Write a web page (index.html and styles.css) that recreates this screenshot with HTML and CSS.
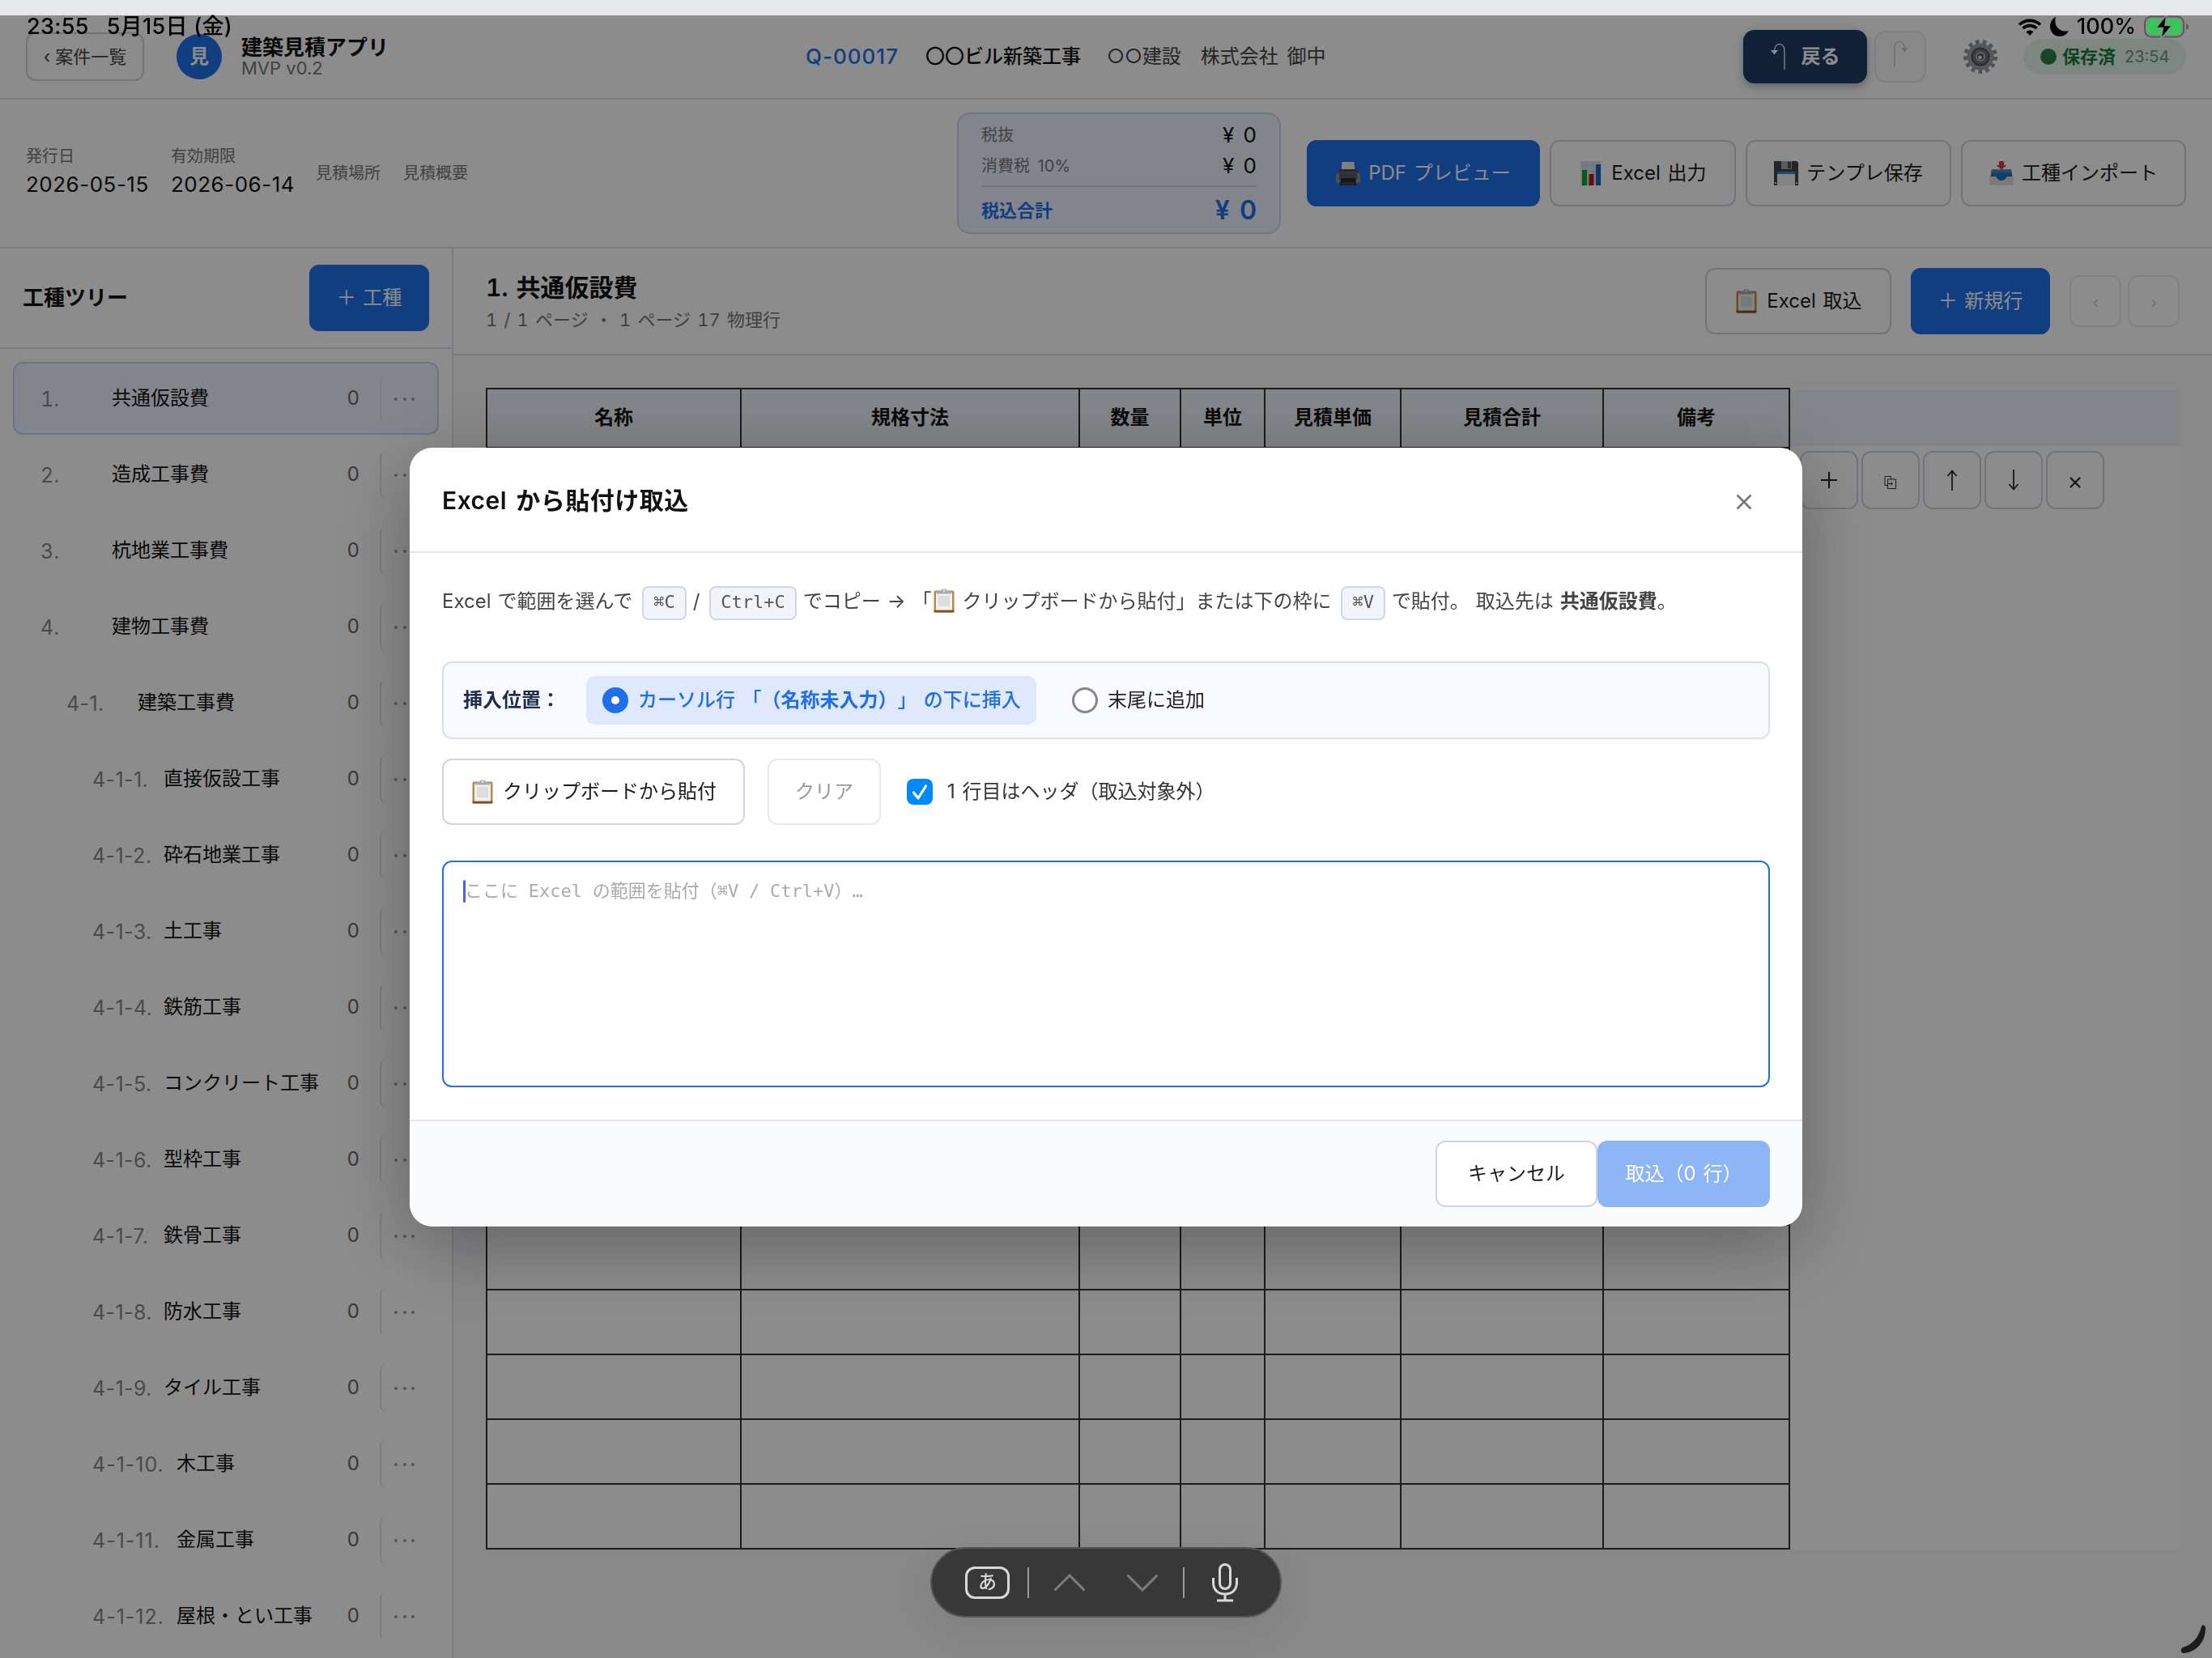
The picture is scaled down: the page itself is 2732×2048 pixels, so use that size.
FILE: index.html
```html
<!DOCTYPE html>
<html lang="ja">
<head>
    <meta charset="UTF-8">
    <meta name="viewport" content="width=device-width, initial-scale=1.0">
    <title>建築見積アプリ</title>
    <link rel="stylesheet" href="styles.css">
</head>
<body>
    <!-- Icon definitions -->
    <svg class="defs" width="0" height="0">
        <symbol id="i-clip" viewBox="0 0 30 30">
            <rect x="2.5" y="2.5" width="25" height="27" rx="2" fill="#b98a4e"/>
            <rect x="2.5" y="26.5" width="25" height="3" rx="1" fill="#80531f"/>
            <rect x="5" y="5" width="20" height="21.5" fill="#f0f0f0"/>
            <rect x="8" y="9" width="14" height="13" fill="#dcdcdc"/>
            <path d="M6 6.500V4l5-1 1.500-2.500h5L19 3l5 1v2.500z" fill="#a9adb3"/>
            <circle cx="15" cy="2.500" r="1.200" fill="#e8f1f5"/>
        </symbol>
        <symbol id="i-printer" viewBox="0 0 30 30">
            <path d="M7.500 1h15l1 11h-17z" fill="#ece8e2"/>
            <path d="M5 10h20l4 5v11H1V15z" fill="#606770"/>
            <path d="M5 10h20l2 3H3z" fill="#474c54"/>
            <rect x="0" y="15" width="30" height="12" rx="2" fill="#878e96"/>
            <rect x="4" y="15" width="22" height="8" fill="#565d66"/>
            <path d="M6 21h18l1 9H5z" fill="#25282c"/>
            <path d="M7 26h16v3.500H7z" fill="#414549"/>
        </symbol>
        <symbol id="i-chart" viewBox="0 0 30 30">
            <rect x="2.500" y="0" width="25" height="30" fill="#d5e0ea"/>
            <path d="M2.500 6h25M2.500 12h25M2.500 18h25M2.500 24h25M9 0v30M18 0v30" stroke="#bccbd8" stroke-width=".6"/>
            <rect x="4" y="11" width="6" height="19" fill="#0ba02b"/>
            <rect x="12.500" y="16" width="6" height="14" fill="#c31216"/>
            <rect x="21" y="4" width="6" height="26" fill="#1466c4"/>
        </symbol>
        <symbol id="i-floppy" viewBox="0 0 30 30">
            <path d="M0 0h28l2 2v28H0z" fill="#3f444b"/>
            <rect x="9" y="0" width="13" height="10" fill="#a4a9ad"/>
            <rect x="17" y="1" width="4" height="8" fill="#4b5056"/>
            <rect x="4" y="13" width="22" height="17" fill="#eceff1"/>
            <rect x="4" y="13" width="22" height="3" fill="#3387d2"/>
            <path d="M1 26h2v2H1zM27 26h2v2h-2z" fill="#dde"/>
        </symbol>
        <symbol id="i-inbox" viewBox="0 0 30 30">
            <path d="M12 0h6v5h3.500L15 10.500 8.500 5H12z" fill="#d8403a"/>
            <path d="M3 10.500h24l1.500 9v5H1.500v-5z" fill="#2470b4"/>
            <path d="M3 10.500h24l.8 4H2.200z" fill="#3d89cc"/>
            <path d="M0 19h7c2 0 3 5 8 5s6-5 8-5h7v9.500c0 1-.5 1.500-1.500 1.500h-27C.5 30 0 29.500 0 28.500z" fill="#e4e1dc"/>
        </symbol>
        <symbol id="i-copy" viewBox="0 0 18 18">
            <path d="M2 1.500h7.500V5M2 1.500v11h3M5.500 5h6l4 0v11.500h-10z" fill="none" stroke="#333" stroke-width="1"/>
            <path d="M5.500 10.500h6M9.500 8.500l2 2-2 2" fill="none" stroke="#333" stroke-width="1"/>
        </symbol>
    </svg>

    <div class="app">
        <header class="topbar">
            <div class="topbar-left">
                <button class="back-btn">‹ 案件一覧</button>
                <div class="logo">見</div>
                <div class="brand">
                    <div class="brand-name">建築見積アプリ</div>
                    <div class="brand-sub">MVP v0.2</div>
                </div>
            </div>
            <div class="topbar-center">
                <span class="quote-no">Q-00017</span>
                <span class="quote-title">〇〇ビル新築工事</span>
                <span class="quote-client">○○建設　株式会社 御中</span>
            </div>
            <div class="topbar-right">
                <button class="undo-btn">
                    <svg width="20" height="34" viewBox="0 0 20 34"><path d="M17 33V9c0-9-12-11-12.500 1" fill="none" stroke="currentColor" stroke-width="1.300"/><path d="M0 9h9l-4.500 5.500z" fill="currentColor"/></svg>
                    戻る
                </button>
                <button class="redo-btn">
                    <svg width="20" height="34" viewBox="0 0 20 34"><path d="M3 33V9c0-9 12-11 12.500 1" fill="none" stroke="currentColor" stroke-width="1.300"/><path d="M11 9h9l-4.500 5.500z" fill="currentColor"/></svg>
                </button>
                <svg class="gear" width="44" height="44" viewBox="-22 -22 44 44">
                    <circle r="18.500" fill="none" stroke="#8d959d" stroke-width="5" stroke-dasharray="4.600 4.340"/>
                    <circle r="14" fill="#666e77" stroke="#9aa1a8" stroke-width="5"/>
                    <circle r="10.500" fill="#6c747c" stroke="#454b52" stroke-width="1.500"/>
                    <circle r="5" fill="#525960" stroke="#adb4ba" stroke-width="2"/>
                    <circle cx="-.5" cy="1" r="2.200" fill="#e8ebee"/>
                </svg>
                <div class="saved"><i class="saved-dot"></i><b>保存済</b><span>23:54</span></div>
            </div>
        </header>

        <section class="summary">
            <div class="meta">
                <div class="meta-item"><label>発行日</label><span>2026-05-15</span></div>
                <div class="meta-item"><label>有効期限</label><span>2026-06-14</span></div>
                <div class="meta-item empty"><label>見積場所</label></div>
                <div class="meta-item empty"><label>見積概要</label></div>
            </div>
            <div class="totals">
                <div class="total-row"><span>税抜</span><b>¥ 0</b></div>
                <div class="total-row"><span>消費税 10%</span><b>¥ 0</b></div>
                <div class="total-row grand"><span>税込合計</span><b>¥ 0</b></div>
            </div>
            <div class="actions">
                <button class="btn primary w-pdf"><svg class="ico"><use href="#i-printer"/></svg>PDF プレビュー</button>
                <button class="btn w-xls"><svg class="ico"><use href="#i-chart"/></svg>Excel 出力</button>
                <button class="btn w-tpl"><svg class="ico"><use href="#i-floppy"/></svg>テンプレ保存</button>
                <button class="btn w-imp"><svg class="ico"><use href="#i-inbox"/></svg>工種インポート</button>
            </div>
        </section>

        <div class="workspace">
            <aside class="sidebar">
                <div class="side-head">
                    <h2>工種ツリー</h2>
                    <button class="btn primary w-add">＋ 工種</button>
                </div>
                <div class="tree" id="tree"></div>
            </aside>

            <main class="main">
                <div class="main-head">
                    <div class="main-title">
                        <h1>1. 共通仮設費</h1>
                        <p>1 / 1 ページ ・ 1 ページ 17 物理行</p>
                    </div>
                    <button class="btn w-take"><svg class="ico"><use href="#i-clip"/></svg>Excel 取込</button>
                    <button class="btn primary w-new">＋ 新規行</button>
                    <div class="pager"><button>‹</button><button>›</button></div>
                </div>
                <div class="sheet">
                    <div class="grid" id="grid">
                        <div class="th">名称</div>
                        <div class="th">規格寸法</div>
                        <div class="th">数量</div>
                        <div class="th">単位</div>
                        <div class="th">見積単価</div>
                        <div class="th">見積合計</div>
                        <div class="th">備考</div>
                    </div>
                    <div class="ops">
                        <div class="ops-head"></div>
                        <div class="ops-row">
                            <button><svg width="22" height="22" viewBox="0 0 22 22"><path d="M11 1v20M1 11h20" stroke="#222" stroke-width="2"/></svg></button>
                            <button class="copy"><svg width="18" height="18"><use href="#i-copy"/></svg></button>
                            <button><svg width="16" height="26" viewBox="0 0 16 26"><path d="M8 26V1.500M2.500 8L8 1.500 13.500 8" fill="none" stroke="#222" stroke-width="1.700"/></svg></button>
                            <button><svg width="16" height="26" viewBox="0 0 16 26"><path d="M8 0v24.500M2.500 18L8 24.500 13.500 18" fill="none" stroke="#222" stroke-width="1.700"/></svg></button>
                            <button class="del"><svg width="14" height="14" viewBox="0 0 14 14"><path d="M1 1l12 12M13 1L1 13" stroke="#222" stroke-width="2.200"/></svg></button>
                        </div>
                    </div>
                </div>
            </main>
        </div>
    </div>

    <div class="overlay">
        <div class="modal">
            <div class="modal-head">
                <h3>Excel から貼付け取込</h3>
                <svg width="20" height="20" viewBox="0 0 20 20"><path d="M1.500 1.500l17 17M18.500 1.500l-17 17" stroke="#777" stroke-width="2.600"/></svg>
            </div>
            <div class="modal-body">
                <p class="hint">Excel で範囲を選んで <kbd>⌘C</kbd> / <kbd>Ctrl+C</kbd> でコピー → 「<svg class="ico"><use href="#i-clip"/></svg> クリップボードから貼付」または下の枠に <kbd>⌘V</kbd> で貼付。 取込先は <b>共通仮設費</b>。</p>
                <div class="position">
                    <strong>挿入位置：</strong>
                    <label class="choice active"><i class="radio on"></i><span>カーソル行 「<b>（名称未入力）</b>」 の下に挿入</span></label>
                    <label class="choice"><i class="radio"></i><span>末尾に追加</span></label>
                </div>
                <div class="tools">
                    <button class="btn w-paste"><svg class="ico"><use href="#i-clip"/></svg>クリップボードから貼付</button>
                    <button class="btn w-clear disabled">クリア</button>
                    <label class="check">
                        <svg width="32" height="32" viewBox="0 0 32 32"><rect width="32" height="32" rx="8" fill="#08f"/><path d="M8.500 17l5.500 7L23.500 9" fill="none" stroke="#fff" stroke-width="3.200" stroke-linecap="round" stroke-linejoin="round"/></svg>
                        <span>1 行目はヘッダ（取込対象外）</span>
                    </label>
                </div>
                <div class="paste-area"><i class="caret"></i><span>ここに Excel の範囲を貼付（⌘V / Ctrl+V）…</span></div>
            </div>
            <div class="modal-foot">
                <button class="btn w-cancel">キャンセル</button>
                <button class="btn primary w-import">取込（0 行）</button>
            </div>
        </div>
    </div>

    <!-- iPad status bar -->
    <div class="status">
        <div class="status-left"><span>23:55</span><span>5月15日 (金)</span></div>
        <div class="status-right">
            <svg width="30" height="22" viewBox="0 0 30 22"><path d="M2 8.500a19 19 0 0 1 26 0M6.500 13a12.500 12.500 0 0 1 17 0" fill="none" stroke="#000" stroke-width="3.600"/><path d="M10.500 17.300a6.500 6.500 0 0 1 9 0L15 22z"/></svg>
            <svg width="23" height="24" viewBox="0 0 23 24"><path d="M7 0C2.500 2 0 6.500 0 11.500 0 18.500 5.200 24 12 24c5 0 9-2.800 10.800-7C14 19.500 3.500 13 7 0z"/></svg>
            <span>100%</span>
            <svg width="56" height="28" viewBox="0 0 56 28"><rect x="1" y="1.500" width="48" height="25" rx="8" fill="none" stroke="#5a5a5a" stroke-width="2"/><rect x="4" y="4.500" width="42" height="19" rx="5" fill="#34c759"/><path d="M52 10c4 1.500 4 6.500 0 8z" fill="#5a5a5a"/><path d="M28-1L15 15.500h8.500L21 29l13.500-16.500H26z" fill="#000" stroke="#8c8c8c" stroke-width="1.500"/></svg>
        </div>
    </div>

    <!-- Floating keyboard bar -->
    <div class="kbar">
        <div class="kbar-lang">あ</div>
        <i></i>
        <svg class="dim" width="40" height="22" viewBox="0 0 40 22"><path d="M1.500 20.500L20 2l18.500 18.500" fill="none" stroke="#7c7c7c" stroke-width="3"/></svg>
        <svg class="dim" width="40" height="22" viewBox="0 0 40 22"><path d="M1.500 1.500L20 20 38.500 1.500" fill="none" stroke="#7c7c7c" stroke-width="3"/></svg>
        <i></i>
        <svg class="mic" width="32" height="48" viewBox="0 0 32 48" fill="none" stroke="#d8d8d8" stroke-width="3"><rect x="9.500" y="1.500" width="13" height="30" rx="6.500"/><path d="M1.500 18v6c0 9 6 14 14.500 14s14.500-5 14.500-14v-6M16 38v8M6 46h20"/></svg>
    </div>

    <svg class="corner" width="34" height="36" viewBox="0 0 34 36"><path d="M27 2c1-2.500 5-2 5 2C32 20 22 33 6 35 1 35.500 0 29 5 27.500 17 24 24 14 27 2z" fill="#1c1c1c"/></svg>

    <script>
        const items = [
            [1, '1.', '共通仮設費'],
            [1, '2.', '造成工事費'],
            [1, '3.', '杭地業工事費'],
            [1, '4.', '建物工事費'],
            [2, '4-1.', '建築工事費'],
            [3, '4-1-1.', '直接仮設工事'],
            [3, '4-1-2.', '砕石地業工事'],
            [3, '4-1-3.', '土工事'],
            [3, '4-1-4.', '鉄筋工事'],
            [3, '4-1-5.', 'コンクリート工事'],
            [3, '4-1-6.', '型枠工事'],
            [3, '4-1-7.', '鉄骨工事'],
            [3, '4-1-8.', '防水工事'],
            [3, '4-1-9.', 'タイル工事'],
            [3, '4-1-10.', '木工事'],
            [3, '4-1-11.', '金属工事'],
            [3, '4-1-12.', '屋根・とい工事']
        ];

        document.getElementById('tree').innerHTML = items.map(([level, no, name], i) => `
            <div class="node level-${level}${i === 0 ? ' selected' : ''}">
                <span class="node-no${no.length > 6 ? ' long' : ''}">${no}</span>
                <span class="node-name">${name}</span>
                <span class="node-count">0</span>
                <span class="node-more"><i></i><i></i><i></i></span>
            </div>`).join('');

        // 17 empty rows x 7 columns
        document.getElementById('grid').insertAdjacentHTML('beforeend', '<div class="td"></div>'.repeat(17 * 7));
    </script>
</body>
</html>
```
FILE: styles.css
```css
* {
    box-sizing: border-box;
}
body {
    margin: 0;
    width: 2732px;
    height: 2048px;
    overflow: hidden;
    background: #e6e8ec;
    color: #111;
    font-family: Inter, "Noto Sans CJK JP", sans-serif;
    font-size: 24px;
    line-height: 1.2;
    word-spacing: 2px;
    text-spacing-trim: space-all;
}
button {
    font: inherit;
    word-spacing: inherit;
    color: inherit;
    padding: 0;
    margin: 0;
}
h1, h2, h3, p {
    margin: 0;
}
.defs {
    position: absolute;
}
.app {
    margin-top: 19px;
    height: 2029px;
    background: #fff;
    display: flex;
    flex-direction: column;
}

/* Buttons */
.btn {
    display: inline-flex;
    align-items: center;
    justify-content: center;
    height: 82px;
    border: 2px solid #ced4e4;
    border-radius: 12px;
    background: #fff;
    white-space: nowrap;
    color: #1a1a1a;
}
.btn.primary {
    background: #1f6feb;
    border-color: #1f6feb;
    color: #fff;
}
.ico {
    width: 30px;
    height: 30px;
    margin-right: 10px;
    flex: none;
}
.w-pdf { width: 288px; }
.w-xls { width: 230px; }
.w-tpl { width: 254px; }
.w-imp { width: 278px; }
.w-add { width: 148px; }
.w-take { width: 230px; }
.w-new { width: 172px; }
.w-paste { width: 374px; }
.w-clear { width: 140px; }
.w-cancel { width: 200px; }
.w-import { width: 213px; }

/* Top bar */
.topbar {
    height: 104px;
    flex: none;
    border-bottom: 2px solid #e0e2ee;
    display: grid;
    grid-template-columns: 995px 1fr 579px;
    align-items: center;
}
.topbar-left {
    display: flex;
    align-items: center;
    padding-left: 32px;
}
.back-btn {
    width: 146px;
    height: 60px;
    border: 2px solid #ced4e4;
    border-radius: 12px;
    background: #fff;
    font-size: 22px;
    color: #444;
    word-spacing: 0;
}
.logo {
    width: 56px;
    height: 56px;
    margin: 0 24px 0 40px;
    border-radius: 50%;
    background: #1f6feb;
    color: #fff;
    font-weight: 600;
    display: flex;
    align-items: center;
    justify-content: center;
}
.brand-name {
    font-size: 26px;
    font-weight: 600;
    line-height: 28px;
}
.brand-sub {
    font-size: 22px;
    line-height: 22px;
    color: #777;
    word-spacing: 0;
}
.topbar-center {
    display: flex;
    align-items: center;
    white-space: nowrap;
}
.quote-no {
    width: 148px;
    font-size: 26px;
    font-weight: 500;
    letter-spacing: 1px;
    color: #1f6feb;
}
.quote-title {
    font-weight: 500;
    margin-right: 32px;
}
.quote-client {
    color: #444;
    word-spacing: 4px;
}
.topbar-right {
    display: flex;
    align-items: center;
}
.undo-btn {
    width: 153px;
    height: 66px;
    border: 0;
    border-radius: 14px;
    background: #203c64;
    color: #fff;
    font-weight: 600;
    display: flex;
    align-items: center;
    justify-content: center;
    gap: 18px;
    box-shadow: 0 4px 12px rgba(32, 60, 100, .4);
}
.redo-btn {
    width: 64px;
    height: 64px;
    margin-left: 9px;
    border: 2px solid #e6e8f0;
    border-radius: 14px;
    background: #fafafc;
    color: #c4c6cc;
}
.gear {
    margin: 0 31px 0 45px;
}
.saved {
    width: 201px;
    height: 44px;
    border-radius: 22px;
    background: #e4f4ea;
    color: #1a7f37;
    display: flex;
    align-items: center;
    padding-left: 21px;
    font-size: 22px;
}
.saved-dot {
    width: 20px;
    height: 20px;
    border-radius: 50%;
    background: #2a7f44;
    margin-right: 7px;
}
.saved b {
    font-weight: 600;
    margin-right: 11px;
}
.saved span {
    font-size: 20px;
    color: #5f9f76;
}

/* Summary */
.summary {
    height: 184px;
    flex: none;
    border-bottom: 2px solid #e0e2ee;
    display: flex;
    align-items: center;
    padding-left: 32px;
}
.meta {
    width: 1150px;
    display: flex;
    align-items: center;
    gap: 28px;
}
.meta-item {
    min-width: 80px;
}
.meta-item label {
    display: block;
    font-size: 20px;
    line-height: 26px;
    color: #777;
}
.meta-item span {
    display: block;
    width: 151px;
    font-size: 26px;
    letter-spacing: .5px;
    line-height: 40px;
    padding-top: 2px;
    white-space: nowrap;
}
.totals {
    width: 400px;
    height: 150px;
    border: 2px solid #c8d8f5;
    border-radius: 16px;
    background: #eef3ff;
    padding: 7px 28px 0;
    margin-right: 32px;
}
.total-row {
    display: flex;
    justify-content: space-between;
    align-items: center;
    height: 38px;
    font-size: 20px;
    color: #777;
    word-spacing: 4px;
}
.total-row b {
    font-size: 26px;
    font-weight: 400;
    color: #111;
}
.total-row.grand {
    height: 60px;
    margin-top: 5px;
    border-top: 2px solid #c8d4f0;
    font-size: 22px;
    font-weight: 600;
    color: #1f6feb;
}
.total-row.grand b {
    font-size: 32px;
    font-weight: 600;
    color: #1f6feb;
}
.actions {
    display: flex;
    gap: 12px;
}

/* Sidebar */
.workspace {
    flex: 1;
    display: flex;
    min-height: 0;
}
.sidebar {
    width: 560px;
    border-right: 2px solid #e0e2ee;
    overflow: hidden;
}
.side-head {
    height: 124px;
    border-bottom: 2px solid #e0e2ee;
    display: flex;
    align-items: center;
    justify-content: space-between;
    padding: 0 28px;
}
.side-head h2 {
    font-size: 26px;
    font-weight: 600;
}
.tree {
    padding: 16px;
    display: flex;
    flex-direction: column;
    gap: 4px;
}
.node {
    flex: none;
    height: 90px;
    border: 2px solid transparent;
    border-radius: 12px;
    display: flex;
    align-items: center;
    padding: 1px 12px 0 0;
}
.node.selected {
    background: #eef3ff;
    border-color: #c2d5f7;
}
.level-1 { padding-left: 32px; }
.level-2 { padding-left: 64px; }
.level-3 { padding-left: 96px; }
.level-1 .node-no {
    font-variant-numeric: tabular-nums;
}
.node-no {
    width: 72px;
    margin-right: 16px;
    font-size: 25px;
    letter-spacing: .4px;
    white-space: nowrap;
    color: #888;
}
.node-no.long {
    width: 88px;
    letter-spacing: 1px;
}
.node-name {
    flex: 1;
    white-space: nowrap;
}
.node-count {
    color: #666;
    margin-right: 25px;
}
.node-more {
    width: 59px;
    height: 59px;
    border-left: 2px solid #e0e2ee;
    border-radius: 8px;
    display: flex;
    align-items: center;
    justify-content: center;
    gap: 6.5px;
}
.node-more i {
    width: 4px;
    height: 4px;
    border-radius: 50%;
    background: #9a9cab;
}

/* Main */
.main {
    flex: 1;
    background: #f7f7fa;
}
.main-head {
    height: 132px;
    background: #fff;
    border-bottom: 2px solid #e0e2ee;
    display: flex;
    align-items: center;
    padding: 0 40px;
}
.main-title {
    flex: 1;
    padding-top: 2px;
    font-variant-numeric: tabular-nums;
}
.main-title h1 {
    font-size: 30px;
    line-height: 44px;
    font-weight: 600;
}
.main-title p {
    font-size: 22px;
    line-height: 37px;
    color: #777;
    word-spacing: 2.3px;
}
.w-new {
    margin-left: 24px;
}
.pager {
    display: flex;
    gap: 8px;
    margin-left: 24px;
}
.pager button {
    width: 64px;
    height: 64px;
    border: 2px solid #e8eaf2;
    border-radius: 12px;
    background: #fff;
    color: #d4d4d8;
    font-size: 20px;
    padding-top: 4px;
}
.sheet {
    display: flex;
    margin: 40px 40px 0;
    background: #fff;
}
.grid {
    width: 1611px;
    flex: none;
    display: grid;
    grid-template-columns: 314px 418px 125px 104px 168px 250px 230px;
    grid-template-rows: 73px;
    grid-auto-rows: 80px;
    border-top: 2px solid #333;
    border-left: 2px solid #333;
}
.th, .td {
    border-right: 2px solid #333;
    border-bottom: 2px solid #333;
}
.th {
    background: #edf2fa;
    font-weight: 600;
    display: flex;
    align-items: center;
    justify-content: center;
}
.ops {
    flex: 1;
}
.ops-head {
    height: 70px;
    margin-top: 2px;
    background: #edf2fa;
}
.ops-row {
    display: flex;
    gap: 4px;
    padding: 6px 0 0 12px;
}
.ops-row button {
    width: 72px;
    height: 72px;
    border: 2px solid #ced4e4;
    border-radius: 12px;
    background: #fff;
    display: flex;
    align-items: center;
    justify-content: center;
}
.ops-row .copy, .ops-row .del {
    padding-top: 5px;
}

/* Modal */
.overlay {
    position: fixed;
    inset: 19px 0 0 0;
    padding-top: 1px;
    background: rgba(0, 0, 0, .45);
    display: flex;
    align-items: center;
    justify-content: center;
}
.modal {
    width: 1720px;
    height: 962px;
    border-radius: 28px;
    background: #fff;
    overflow: hidden;
    display: flex;
    flex-direction: column;
    box-shadow: 0 24px 96px rgba(0, 0, 0, .3);
}
.modal-head {
    height: 130px;
    border-bottom: 2px solid #e0e4f0;
    display: flex;
    align-items: center;
    justify-content: space-between;
    padding: 1px 62px 0 40px;
}
.modal-head h3 {
    font-size: 30px;
    font-weight: 600;
    letter-spacing: .5px;
    word-spacing: 3px;
}
.modal-head svg {
    margin-top: 5px;
}
.modal-body {
    flex: 1;
    padding: 40px 40px 0;
}
.hint {
    height: 94px;
    line-height: 40px;
    color: #444;
    white-space: nowrap;
    word-spacing: 1.2px;
}
.hint .ico {
    margin: 0;
    vertical-align: -6px;
}
kbd {
    display: inline-block;
    height: 42px;
    line-height: 36px;
    padding: 0 12px;
    margin: 0 0 0 4px;
    border: 2px solid #cfd6e6;
    border-radius: 8px;
    background: #f2f4fa;
    font-family: "DejaVu Sans Mono", "Noto Sans CJK JP", monospace;
    font-size: 22px;
    color: #555;
}
.position {
    height: 96px;
    border: 2px solid #d6e0f3;
    border-radius: 12px;
    background: #f8faff;
    display: flex;
    align-items: center;
    padding-left: 24px;
}
.position strong {
    width: 152px;
    font-weight: 600;
    color: #1f2d4d;
}
.choice {
    height: 60px;
    border-radius: 10px;
    display: flex;
    align-items: center;
    gap: 12px;
    padding: 0 20px;
    margin-right: 24px;
    color: #222;
    white-space: nowrap;
}
.choice.active {
    width: 556px;
    background: #dfe8ff;
    color: #1f6feb;
    font-weight: 500;
}
.choice b {
    font-weight: 700;
}
.radio {
    width: 32px;
    height: 32px;
    border: 3px solid #85858a;
    border-radius: 50%;
    background: #fff;
    flex: none;
}
.radio.on {
    border: 11px solid #1f6feb;
}
.tools {
    display: flex;
    align-items: center;
    margin-top: 24px;
}
.w-clear {
    margin: 0 32px 0 28px;
}
.disabled {
    border-color: #e6e9f1;
    color: #999;
}
.check {
    display: flex;
    align-items: center;
    gap: 18px;
    color: #333;
}
.paste-area {
    height: 280px;
    margin-top: 44px;
    border: 2px solid #1f6feb;
    border-radius: 12px;
    padding: 22px 24px;
    display: flex;
    font-family: "DejaVu Sans Mono", "Noto Sans CJK JP", monospace;
    font-size: 22px;
    line-height: 28px;
    color: #aaa;
    word-spacing: -.5px;
}
.caret {
    width: 3px;
    height: 28px;
    margin-right: -1px;
    border-radius: 2px;
    background: #4169e8;
}
.modal-foot {
    height: 132px;
    border-top: 2px solid #e2e5ee;
    background: #f9fbfd;
    display: flex;
    align-items: center;
    justify-content: flex-end;
    padding-right: 40px;
}
.btn.w-import {
    background: #8eb5f5;
    border-color: #8eb5f5;
}

/* Status bar */
.status {
    position: fixed;
    top: 18px;
    left: 33px;
    right: 28px;
    height: 30px;
    display: flex;
    justify-content: space-between;
    align-items: center;
    font-size: 27px;
    font-weight: 500;
    word-spacing: 0;
    color: #000;
}
.status-left {
    display: flex;
    gap: 22px;
    letter-spacing: .3px;
}
.status-right {
    display: flex;
    align-items: center;
    gap: 10px;
}

/* Keyboard bar */
.kbar {
    position: fixed;
    left: 1149px;
    top: 1911px;
    width: 434px;
    height: 87px;
    border-radius: 44px;
    border: 2px solid #555;
    background: #383838;
    box-shadow: 0 8px 60px rgba(0, 0, 0, .1);
    display: flex;
    align-items: center;
    padding-left: 41px;
}
.kbar-lang {
    width: 55px;
    height: 40px;
    border: 3px solid #d8d8d8;
    border-radius: 12px;
    color: #d8d8d8;
    font-size: 23px;
    font-weight: 500;
    display: flex;
    align-items: center;
    justify-content: center;
}
.kbar > i {
    width: 2px;
    height: 38px;
    background: #999;
    margin: 0 30px 0 22px;
}
.kbar .dim + .dim {
    margin-left: 50px;
}
.kbar .dim + i {
    margin: 0 34px 0 30px;
}
.corner {
    position: fixed;
    left: 2692px;
    top: 2007px;
}
```
